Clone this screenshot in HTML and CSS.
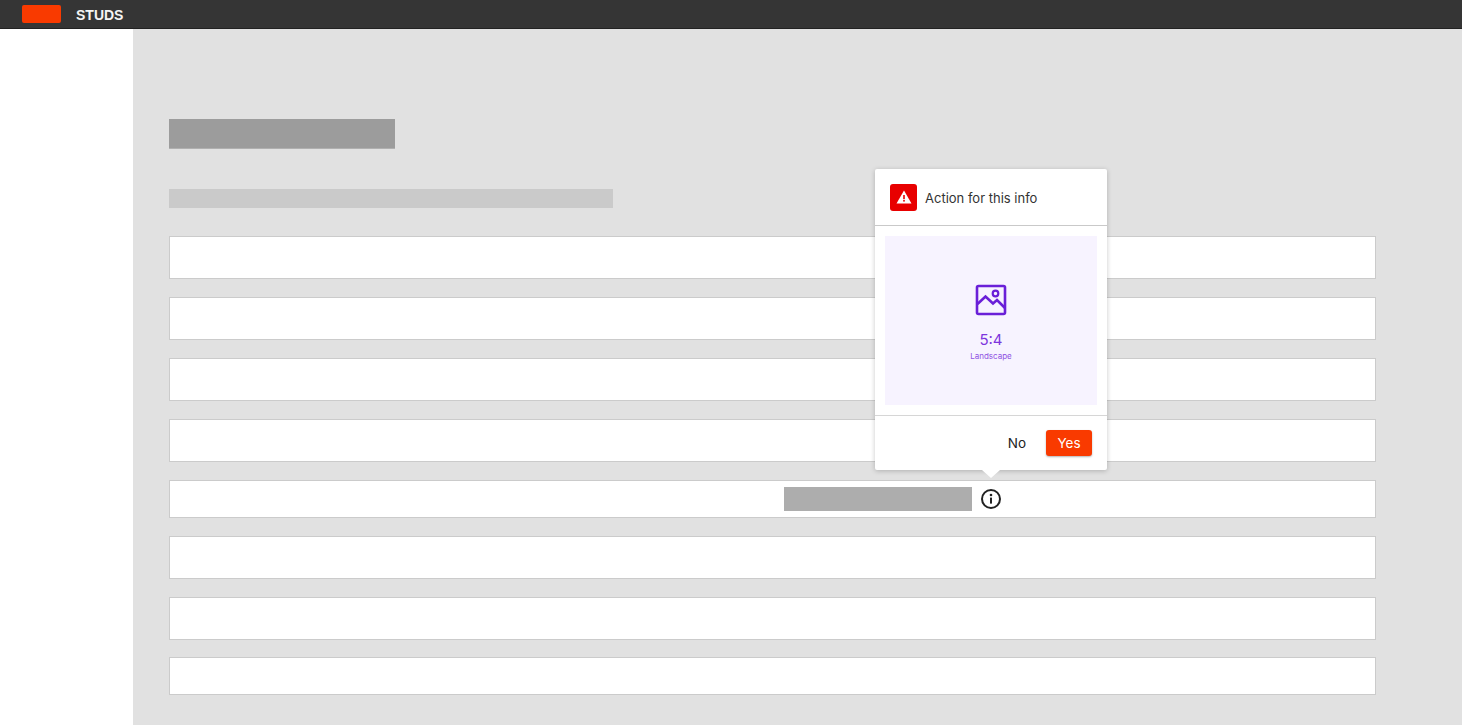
FILE: index.html
```html
<!DOCTYPE html>
<html lang="en">
<head>
    <meta charset="UTF-8">
    <title>Studs</title>
    <link rel="stylesheet" href="styles.css">
</head>
<body>
<div class="topbar">
    <span class="logo"></span>
    <span class="brand">STUDS</span>
</div>
<div class="wrap">
    <div class="side"></div>
    <div class="main">
        <div class="title"></div>
        <div class="sub"></div>
        <div class="row"></div>
        <div class="row"></div>
        <div class="row"></div>
        <div class="row"></div>
        <div class="row row-info">
            <span class="label"></span>
            <span class="info">
                <svg width="20" height="20" viewBox="0 0 20 20">
                    <circle cx="10" cy="10" r="9" fill="none" stroke="#222" stroke-width="2"/>
                    <rect x="9" y="8.6" width="2" height="6" fill="#222"/>
                    <circle cx="10" cy="6" r="1.3" fill="#222"/>
                </svg>
                <div class="pop">
                    <div class="pop-head">
                        <span class="warn">
                            <svg width="18" height="16" viewBox="0 0 18 16">
                                <path d="M9 1.5L16.5 14.5H1.5Z" fill="#fff"/>
                                <rect x="8.2" y="6" width="1.6" height="4.2" fill="#e80000"/>
                                <rect x="8.2" y="11" width="1.6" height="1.6" fill="#e80000"/>
                            </svg>
                        </span>
                        <span class="pop-title">Action for this info</span>
                    </div>
                    <div class="pop-body">
                        <div class="ratio">
                            <svg width="32" height="32" viewBox="0 0 32 32" fill="none" stroke="#6a1fd8" stroke-width="2.6">
                                <rect x="2" y="2" width="28" height="28" rx="1.5"/>
                                <path d="M2.5 20L10.5 12.5L18 19.5L22 16L30 24"/>
                                <circle cx="20.5" cy="9.5" r="2.8" stroke-width="2.2"/>
                            </svg>
                            <span class="ratio-num">5:4</span>
                            <span class="ratio-name">Landscape</span>
                        </div>
                    </div>
                    <div class="pop-foot">
                        <span class="btn-no">No</span>
                        <span class="btn-yes">Yes</span>
                    </div>
                </div>
            </span>
        </div>
        <div class="row"></div>
        <div class="row"></div>
        <div class="row row-low"></div>
    </div>
</div>
</body>
</html>
```
FILE: styles.css
```css
html,body{
    width: 100%;
    height: 100%;
    overflow: hidden;
}
*{
    margin:0;
    padding:0;
    box-sizing: border-box;
}
body{
    font-family: "Liberation Sans", Arial, sans-serif;
    background: #fff;
}
.topbar{
    height: 29px;
    background: #353535;
    border-bottom: 1px solid #222;
    display: flex;
    align-items: center;
    padding-left: 22px;
}
.logo{
    width: 39px;
    height: 18px;
    background: #f93a00;
    border-radius: 2px;
}
.brand{
    margin: 1px 0 0 15px;
    color: #f4f4f4;
    font-size: 14px;
    font-weight: bold;
}
.wrap{
    display: flex;
    height: 696px;
}
.side{
    width: 133px;
    background: #fff;
}
.main{
    flex: 1;
    background: #e1e1e1;
    padding: 90px 86px 0 36px;
}
.title{
    width: 226px;
    height: 30px;
    background: #9c9c9c;
    border-bottom: 1px solid #b0b0b0;
}
.sub{
    width: 444px;
    height: 19px;
    margin: 40px 0 28px;
    background: #cacaca;
}
.row{
    height: 43px;
    margin-bottom: 18px;
    background: #fff;
    border: 1px solid #cbcbcb;
}
.row-low{
    height: 38px;
    margin-top: -1px;
}
.row-info{
    height: 38px;
    display: flex;
    align-items: center;
    padding-left: 614px;
}
.label{
    width: 188px;
    height: 24px;
    background: #adadad;
}
.info{
    position: relative;
    display: block;
    width: 20px;
    height: 20px;
    margin-left: 9px;
}
.pop{
    position: absolute;
    left: -106px;
    bottom: 39px;
    width: 232px;
    height: 301px;
    background: #fff;
    border-radius: 2px;
    box-shadow: 0 1px 5px rgba(0,0,0,.22);
}
.pop:after{
    content: "";
    position: absolute;
    left: 107px;
    top: 100%;
    border-left: 9px solid transparent;
    border-right: 9px solid transparent;
    border-top: 8px solid #fff;
}
.pop-head{
    height: 57px;
    display: flex;
    align-items: center;
    padding-left: 15px;
    border-bottom: 1px solid #c9c9c9;
}
.warn{
    width: 27px;
    height: 27px;
    background: #e80000;
    border-radius: 3px;
    display: flex;
    align-items: center;
    justify-content: center;
}
.pop-title{
    margin: 1px 0 0 8px;
    font-family: Inter, "Liberation Sans", sans-serif;
    font-size: 13px;
    color: #333;
}
.pop-body{
    height: 190px;
    padding: 10px;
    border-bottom: 1px solid #d6d6d6;
}
.ratio{
    height: 169px;
    background: #f7f3ff;
    display: flex;
    flex-direction: column;
    align-items: center;
    padding-top: 48px;
}
.ratio-num{
    margin-top: 15px;
    font-family: Inter, "Liberation Sans", sans-serif;
    font-size: 15px;
    line-height: 18px;
    color: #7d35dd;
}
.ratio-name{
    margin-top: 2px;
    font-family: Inter, "Liberation Sans", sans-serif;
    font-size: 8px;
    line-height: 10px;
    color: #8f52e3;
}
.pop-foot{
    height: 54px;
    display: flex;
    align-items: center;
    justify-content: flex-end;
    padding-right: 15px;
}
.btn-no{
    margin-right: 20px;
    font-family: Inter, "Liberation Sans", sans-serif;
    font-size: 13.5px;
    color: #222;
}
.btn-yes{
    width: 46px;
    height: 26px;
    line-height: 26px;
    text-align: center;
    background: #f93a00;
    border-radius: 3px;
    box-shadow: 0 1px 2px rgba(0,0,0,.3);
    font-family: Inter, "Liberation Sans", sans-serif;
    font-size: 13.5px;
    color: #fff;
}
```
